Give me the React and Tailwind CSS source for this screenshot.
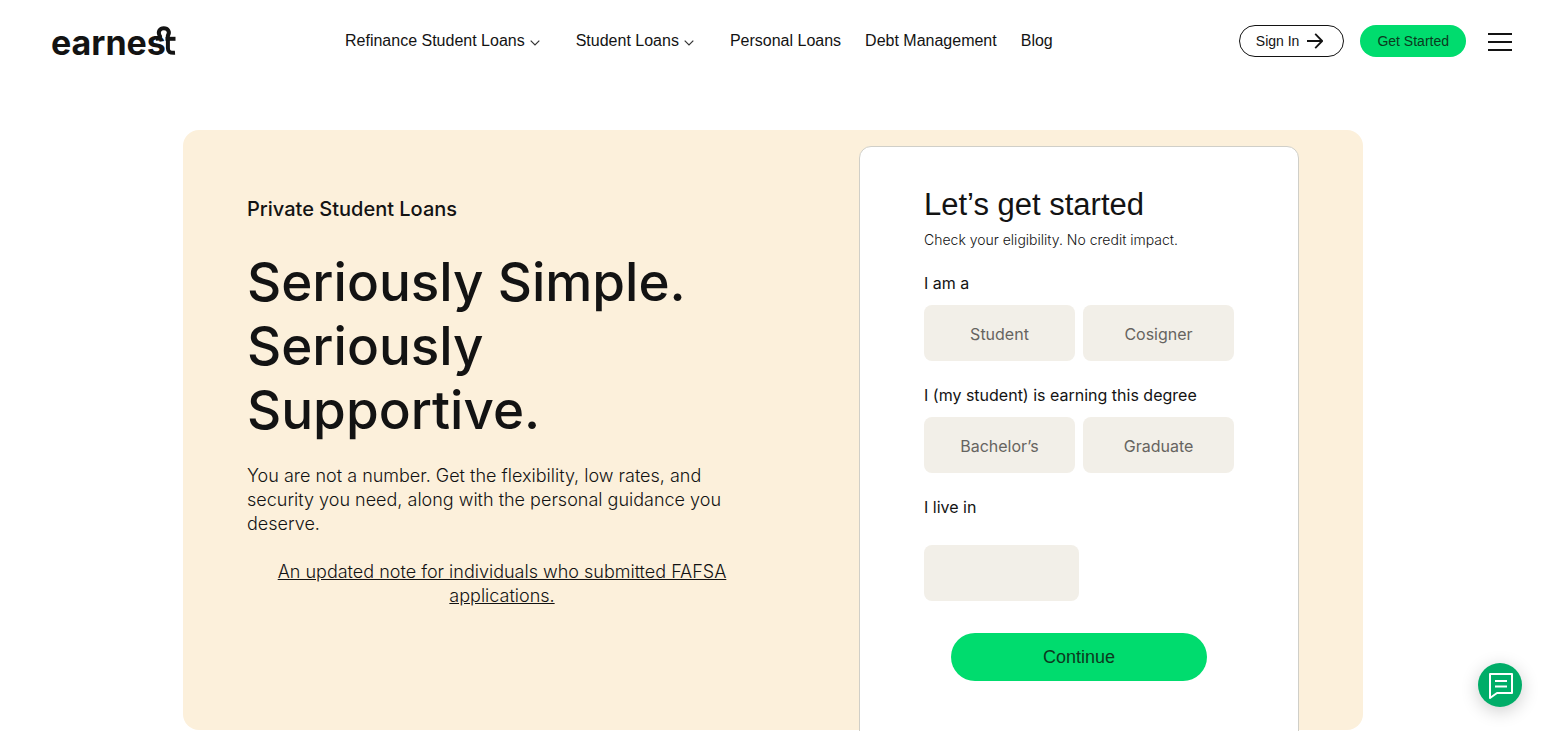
import React from 'react';

const menus = [
  { label: 'Refinance Student Loans', more: true },
  { label: 'Student Loans', more: true },
  { label: 'Personal Loans' },
  { label: 'Debt Management' },
  { label: 'Blog' },
];

function Logo() {
  return (
    <svg viewBox="0 0 126 32" className="block h-8 w-[126px] overflow-visible" role="img" aria-label="earnest">
      <text x="0" y="29.500" fontSize="34" fontWeight="700" fill="#131313" className="font-['Inter',sans-serif]">
        earnes
      </text>
      <g fill="none" stroke="#131313" strokeWidth="4">
        <path d="M105 13.800 C108 14 110 12.500 108.600 10.500 C106.500 6.500 109 3.200 112.800 3.200 C116.800 3.200 119.300 7 116.900 10.500 V23 C116.900 26.500 118.500 28.200 124 27.800" />
        <path d="M114.500 13.800 H124.500" />
      </g>
    </svg>
  );
}

function Chevron() {
  return (
    <svg viewBox="0 0 10 6" className="mt-1 h-1.5 w-2.5" fill="none" stroke="#333" strokeWidth="1.2" aria-hidden="true">
      <path d="M.7 .7 5 5 9.300 .7" />
    </svg>
  );
}

function Header() {
  return (
    <header className="flex items-center pt-[25px] pr-[34px] pl-[51px] font-['Liberation_Sans',sans-serif]">
      <a href="#home" className="shrink-0">
        <Logo />
      </a>
      <nav className="ml-[168px] flex items-center gap-6 text-base whitespace-nowrap">
        {menus.map((m) =>
          m.more ? (
            <button key={m.label} type="button" className="mr-3 flex items-center gap-[5px]">
              {m.label}
              <Chevron />
            </button>
          ) : (
            <a key={m.label} href="#page">
              {m.label}
            </a>
          )
        )}
      </nav>
      <div className="ml-auto flex items-center gap-4 text-sm whitespace-nowrap">
        <a href="#signin" className="flex h-8 items-center gap-2 rounded-full border border-[#131313] pr-5 pl-4">
          Sign In
          <svg viewBox="0 0 16 16" className="h-4 w-4" fill="none" stroke="#131313" strokeWidth="1.8" aria-hidden="true">
            <path d="M0 8H15M8.200 .8 15.200 8 8.200 15.200" />
          </svg>
        </a>
        <a href="#start" className="flex h-8 items-center rounded-full bg-[#00dc6e] px-[17px] text-[#0b3a1e]">
          Get Started
        </a>
        <button type="button" aria-label="Menu" className="ml-1.5 flex h-8 w-6 items-center">
          <svg viewBox="0 0 24 20" className="h-5 w-6" fill="none" stroke="#131313" strokeWidth="2" aria-hidden="true">
            <path d="M0 3H24M0 11H24M0 19H24" />
          </svg>
        </button>
      </div>
    </header>
  );
}

function Choice({ legend, options }) {
  return (
    <fieldset className="mt-[22px]">
      <legend className="mb-2.5 text-base leading-6">{legend}</legend>
      <div className="grid grid-cols-2 gap-2">
        {options.map((o) => (
          <button key={o} type="button" className="h-14 rounded-lg bg-[#f2efe8] pt-0.5 text-base text-[#666460]">
            {o}
          </button>
        ))}
      </div>
    </fieldset>
  );
}

function EligibilityForm() {
  return (
    <form className="-mb-16 w-[440px] shrink-0 self-start rounded-xl border border-[#d0cfc8] bg-white px-16 pt-9 pb-24">
      <h2 className="font-['Liberation_Sans',sans-serif] text-[31px] leading-[44px]">Let’s get started</h2>
      <p className="mt-1 text-sm leading-[18px] font-light">Check your eligibility. No credit impact.</p>
      <Choice legend="I am a" options={['Student', 'Cosigner']} />
      <Choice legend="I (my student) is earning this degree" options={['Bachelor’s', 'Graduate']} />
      <label htmlFor="state" className="mt-[22px] block text-base leading-6">
        I live in
      </label>
      <select id="state" defaultValue="" className="mt-[26px] block h-14 w-1/2 appearance-none rounded-lg bg-[#f2efe8] px-4">
        <option value="" />
        <option value="CA">California</option>
        <option value="NY">New York</option>
      </select>
      <button
        type="submit"
        className="mx-auto mt-8 block h-12 w-64 rounded-full bg-[#00dc6e] font-['Liberation_Sans',sans-serif] text-lg text-[#0b3a1e]"
      >
        Continue
      </button>
    </form>
  );
}

export default function App() {
  return (
    <div className="min-h-screen overflow-x-hidden bg-white pb-20 font-['Inter',sans-serif] text-[#131313]">
      <Header />
      <main className="mx-auto mt-[73px] flex min-h-[600px] max-w-[1180px] justify-between rounded-2xl bg-[#fcf0db] px-16 pt-4">
        <section className="max-w-[510px] pt-12">
          <p className="text-xl leading-[30px] font-medium">Private Student Loans</p>
          <h1 className="mt-[26px] text-[53px] leading-16 font-medium">
            Seriously Simple.
            <br />
            Seriously
            <br />
            Supportive.
          </h1>
          <p className="mt-[22px] max-w-[480px] text-lg leading-6 font-light">
            You are not a number. Get the flexibility, low rates, and security you need, along with the personal guidance you deserve.
          </p>
          <p className="mt-6 text-center text-lg leading-6 font-light">
            <a href="#note" className="underline">
              An updated note for individuals who submitted FAFSA applications.
            </a>
          </p>
        </section>
        <EligibilityForm />
      </main>
      <button
        type="button"
        aria-label="Chat"
        className="fixed right-6 bottom-6 flex h-11 w-11 items-center justify-center rounded-full bg-[#00ad68] shadow-[0_4px_18px_rgba(0,0,0,0.2)]"
      >
        <svg viewBox="0 0 26 28" className="h-7 w-[26px]" fill="none" stroke="#fff" strokeWidth="2" strokeLinejoin="round" aria-hidden="true">
          <path d="M3 3H25V22H10L3 27Z" />
          <path d="M8 10H20M8 15.500H20" />
        </svg>
      </button>
    </div>
  );
}
